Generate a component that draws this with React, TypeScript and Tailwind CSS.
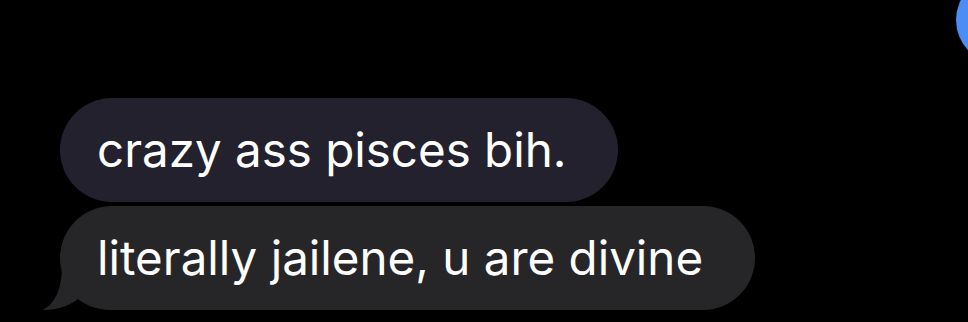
export default function App() {
    return (
        <div className="relative h-[322px] w-[968px] overflow-hidden bg-black font-['Inter','Liberation_Sans',sans-serif]">
            <div className="absolute -right-[76px] -top-[24px] h-[88px] w-[88px] rounded-full bg-[#4b8cf5]" />
            <div className="flex flex-col items-start gap-[4px] pl-[60px] pt-[98px]">
                <div className="flex h-[104px] items-center rounded-full bg-[#22212d] pl-[37px] pr-[52px] text-[47.5px] text-white">
                    crazy ass pisces bih.
                </div>
                <div className="relative flex h-[104px] items-center rounded-full bg-[#262628] pl-[37px] pr-[52px] text-[47.5px] text-white">
                    <svg className="absolute -left-[20px] bottom-0" width="70" height="45" viewBox="0 0 70 45">
                        <path d="M22 0 C22 25 15 38 3 45 C15 45 28 42 38 34 C45 40 55 44 70 45 L70 0 Z" fill="#262628" />
                    </svg>
                    <span className="relative">literally jailene, u are divine</span>
                </div>
            </div>
        </div>
    )
}
